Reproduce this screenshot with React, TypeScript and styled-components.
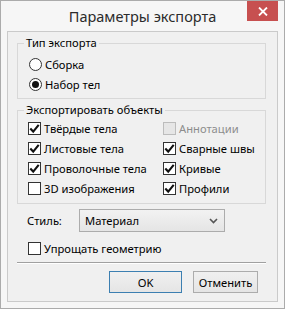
import React from "react"
import styled, { createGlobalStyle } from "styled-components"

const GlobalStyle = createGlobalStyle`
  html, body {
    margin: 0;
    padding: 0;
    background: #ffffff;
  }
  body {
    font-family: "Noto Sans", "Open Sans", sans-serif;
    font-size: 11.2px;
    color: #000;
  }
`

const Window = styled.div`
  width: 285px;
  height: 309px;
  box-sizing: border-box;
  border: 1px solid #ababab;
  background: #f6f6f6;
  display: flex;
  flex-direction: column;
`

const TitleBar = styled.div`
  height: 30px;
  flex: none;
  display: grid;
  grid-template-columns: 1fr auto 1fr;
  align-items: start;
`

const Title = styled.div`
  grid-column: 2;
  font-size: 14.5px;
  line-height: 30px;
  color: #2b2b2b;
`

const CloseButton = styled.div`
  grid-column: 3;
  justify-self: end;
  margin-right: 6px;
  width: 31px;
  height: 20px;
  background: #c75050;
  display: flex;
  align-items: center;
  justify-content: center;
`

const Client = styled.div`
  flex: 1;
  margin: 0 6px 6px;
  border: 1px solid #cacaca;
  background: #f0f0f0;
  padding: 3px 11px 8px 9px;
  display: flex;
  flex-direction: column;
`

const Group = styled.fieldset<{ $gap?: number }>`
  margin: ${p => p.$gap || 0}px 0 0;
  padding: 0 0 ${p => (p.$gap ? 5 : 4)}px;
  border: 1px solid #d8d8d8;
  min-width: 0;
`

const Legend = styled.legend`
  margin-left: 6px;
  padding: 0 2px;
  line-height: 16px;
`

const List = styled.div<{ $cols?: number }>`
  padding-top: ${p => (p.$cols ? 0 : 3)}px;
  padding-left: 10px;
  display: grid;
  grid-template-columns: ${p => (p.$cols ? "135px 1fr" : "1fr")};
`

const Option = styled.label<{ $disabled?: boolean }>`
  height: 20px;
  display: flex;
  align-items: center;
  gap: 3px;
  color: ${p => (p.$disabled ? "#8d8d8d" : "#000")};
  white-space: nowrap;
`

const Box = styled.span<{ $disabled?: boolean }>`
  width: 13px;
  height: 13px;
  box-sizing: border-box;
  flex: none;
  border: 1px solid ${p => (p.$disabled ? "#bcbcbc" : "#333")};
  background: ${p => (p.$disabled ? "#e6e6e6" : "#fff")};
  display: flex;
  align-items: center;
  justify-content: center;
`

const Radio = styled.span<{ $on?: boolean }>`
  width: 13px;
  height: 13px;
  box-sizing: border-box;
  flex: none;
  margin-left: 1px;
  border: 1px solid #333;
  border-radius: 50%;
  background: #fff;
  display: flex;
  align-items: center;
  justify-content: center;
  &::after {
    content: "";
    width: 7px;
    height: 7px;
    border-radius: 50%;
    background: ${p => (p.$on ? "#111" : "transparent")};
  }
`

const StyleRow = styled.div`
  margin-top: 5px;
  height: 23px;
  display: flex;
  align-items: center;
  padding-left: 10px;
`

const StyleLabel = styled.span`
  width: 52px;
`

const Select = styled.div`
  width: 146px;
  height: 23px;
  box-sizing: border-box;
  border: 1px solid #acacac;
  background: linear-gradient(#f2f2f2, #e5e5e5);
  display: flex;
  align-items: center;
  justify-content: space-between;
  padding: 0 6px 0 5px;
`

const Simplify = styled(Option)`
  margin-top: 6px;
  padding-left: 11px;
`

const Separator = styled.div`
  margin-top: 4px;
  height: 1px;
  background: #a0a0a0;
  border-bottom: 1px solid #fff;
`

const Buttons = styled.div`
  margin-top: 7px;
  display: flex;
  justify-content: flex-end;
  gap: 11px;
  padding-right: 8px;
`

const Button = styled.div<{ $default?: boolean; $w: number }>`
  width: ${p => p.$w}px;
  height: 22px;
  box-sizing: border-box;
  border: 1px solid ${p => (p.$default ? "#3c7fb1" : "#acacac")};
  background: linear-gradient(#f0f0f0, #e5e5e5);
  display: flex;
  align-items: center;
  justify-content: center;
`

const Check = () => (
  <svg width="11" height="11" viewBox="0 0 11 11">
    <path d="M1.3 5.6 L4.2 8.6 L9.7 1.8" fill="none" stroke="#111" strokeWidth="2.1" />
  </svg>
)

const CheckItem = ({ label, on, disabled }: { label: string; on?: boolean; disabled?: boolean }) => (
  <Option $disabled={disabled}>
    <Box $disabled={disabled}>{on && <Check />}</Box>
    {label}
  </Option>
)

const objects: [string, boolean, boolean?][] = [
  ["Твёрдые тела", true],
  ["Аннотации", false, true],
  ["Листовые тела", true],
  ["Сварные швы", true],
  ["Проволочные тела", true],
  ["Кривые", true],
  ["3D изображения", false],
  ["Профили", true],
]

export default function App() {
  return (
    <>
      <GlobalStyle />
      <Window>
        <TitleBar>
          <Title>Параметры экспорта</Title>
          <CloseButton>
            <svg width="10" height="9" viewBox="0 0 10 9">
              <path d="M1 0.5 L9 8.5 M9 0.5 L1 8.5" stroke="#fff" strokeWidth="1.8" />
            </svg>
          </CloseButton>
        </TitleBar>
        <Client>
          <Group>
            <Legend>Тип экспорта</Legend>
            <List>
              <Option>
                <Radio />
                Сборка
              </Option>
              <Option>
                <Radio $on />
                Набор тел
              </Option>
            </List>
          </Group>
          <Group $gap={3}>
            <Legend>Экспортировать объекты</Legend>
            <List $cols={2}>
              {objects.map(([label, on, disabled]) => (
                <CheckItem key={label} label={label} on={on} disabled={disabled} />
              ))}
            </List>
          </Group>
          <StyleRow>
            <StyleLabel>Стиль:</StyleLabel>
            <Select>
              Материал
              <svg width="9" height="6" viewBox="0 0 9 6">
                <path d="M1 1 L4.5 4.5 L8 1" fill="none" stroke="#555" strokeWidth="1.6" />
              </svg>
            </Select>
          </StyleRow>
          <Simplify>
            <Box />
            Упрощать геометрию
          </Simplify>
          <Separator />
          <Buttons>
            <Button $default $w={73}>OK</Button>
            <Button $w={65}>Отменить</Button>
          </Buttons>
        </Client>
      </Window>
    </>
  )
}
